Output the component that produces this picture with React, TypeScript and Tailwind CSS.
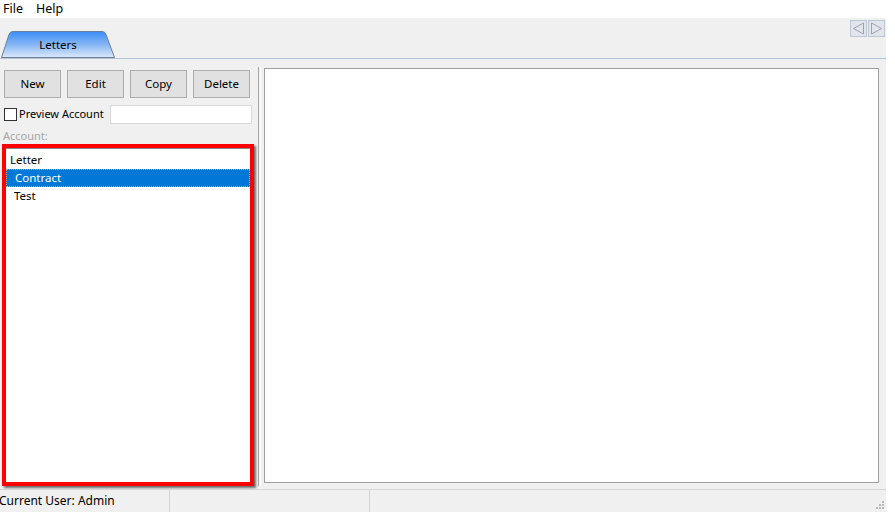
import React from 'react';

const font = { fontFamily: '"Noto Sans", "Open Sans", sans-serif' };

// blue gradient tab with slanted sides
const TabShape: React.FC = () => (
  <svg className="absolute inset-0" width="114" height="27" viewBox="0 0 114 27">
    <defs>
      <linearGradient id="tabFill" x1="0" y1="0" x2="0" y2="1">
        <stop offset="0" stopColor="#3a8cf6" />
        <stop offset="0.55" stopColor="#8dbaf5" />
        <stop offset="1" stopColor="#dce9fb" />
      </linearGradient>
    </defs>
    <path
      d="M0.5 26.5 L8 3.5 Q9 0.5 12 0.5 L101 0.5 Q104 0.5 105 3.5 L113.5 26.5 Z"
      fill="url(#tabFill)"
      stroke="#6d7f96"
      strokeWidth="1"
    />
  </svg>
);

const ArrowButton: React.FC<{ dir: 'left' | 'right' }> = ({ dir }) => (
  <div className="w-[17px] h-[17px] bg-[#e2e6ec] border border-[#bcc7d4] flex items-center justify-center">
    <svg width="13" height="13" viewBox="0 0 13 13">
      {dir === 'left' ? (
        <path d="M11.5 1 L1.5 6.5 L11.5 12 Z" fill="none" stroke="#9aa3ae" strokeWidth="1" />
      ) : (
        <path d="M1.5 1 L11.5 6.5 L1.5 12 Z" fill="none" stroke="#9aa3ae" strokeWidth="1" />
      )}
    </svg>
  </div>
);

const ToolButton: React.FC<{ label: string }> = ({ label }) => (
  <button className="w-[57px] h-[28px] bg-[#e1e1e1] border border-[#adadad] text-[11.5px] text-black flex items-center justify-center">
    {label}
  </button>
);

const App: React.FC = () => {
  const items = [
    { name: 'Letter', indent: false, selected: false },
    { name: 'Contract', indent: true, selected: true },
    { name: 'Test', indent: true, selected: false },
  ];

  return (
    <div className="w-[895px] h-[512px] bg-white flex overflow-hidden" style={font}>
      <div className="w-[886px] h-full bg-[#f0f0f0] flex flex-col">
        {/* Menu bar */}
        <div className="h-[18px] bg-white flex items-center text-[12.5px] text-black leading-none w-[895px]">
          <span className="ml-[3px]">File</span>
          <span className="ml-[13px]">Help</span>
        </div>

        {/* Tab strip */}
        <div className="h-[41px] flex items-start justify-between border-b border-[#b4c3d5]">
          <div className="relative ml-[1px] mt-[13px] w-[114px] h-[27px] flex items-center justify-center">
            <TabShape />
            <span className="relative text-[11.5px] text-black mt-[1px]">Letters</span>
          </div>
          <div className="flex gap-px mt-[2px] mr-[1px]">
            <ArrowButton dir="left" />
            <ArrowButton dir="right" />
          </div>
        </div>

        {/* Body */}
        <div className="flex-1 flex">
          {/* Left pane */}
          <div className="w-[256px] flex flex-col pt-[11px]">
            <div className="flex gap-[6px] pl-[4px]">
              <ToolButton label="New" />
              <ToolButton label="Edit" />
              <ToolButton label="Copy" />
              <ToolButton label="Delete" />
            </div>
            <div className="flex items-center mt-[7px] pl-[4px] w-[252px] h-[19px]">
              <div className="w-[13px] h-[13px] border border-[#333] bg-white" />
              <span className="ml-[2px] text-[11px] text-black">Preview Account</span>
              <div className="ml-auto w-[142px] h-[19px] bg-white border border-[#d9d9d9]" />
            </div>
            <div className="mt-[5px] pl-[3px] text-[11px] text-[#a6a6a6] leading-[14px]">Account:</div>
            <div className="mt-px ml-[2px] w-[252px] h-[342px] border-[4px] border-[#ff0000] shadow-[2px_2px_2px_rgba(0,0,0,0.55)] bg-white">
              <div className="h-full border-t border-[#888] pt-[2px] flex flex-col">
                {items.map((item) => (
                  <div
                    key={item.name}
                    className={
                      item.selected
                        ? 'h-[18px] flex items-center bg-[#0078d7] text-white border border-dotted border-[#f4a23c] text-[11.5px]'
                        : 'h-[18px] flex items-center text-black text-[11.5px]'
                    }
                  >
                    <span className={item.indent ? 'ml-[8px]' : 'ml-[4px]'}>{item.name}</span>
                  </div>
                ))}
              </div>
            </div>
          </div>

          {/* Splitter */}
          <div className="w-[8px] flex pt-[8px] pb-[3px]">
            <div className="ml-[2px] w-px bg-[#a8a8a8]" />
            <div className="ml-px w-px bg-white" />
          </div>

          {/* Preview pane */}
          <div className="flex-1 pt-[9px] pb-[6px] pr-[7px]">
            <div className="w-full h-full bg-white border border-[#a0a0a0]" />
          </div>
        </div>

        {/* Status bar */}
        <div className="h-[23px] border-t border-[#d7d7d7] flex items-center text-[12px] text-black relative">
          <div className="w-[170px] h-full flex items-center border-r border-[#d4d4d4]">
            <span className="-ml-[1px]">Current User: Admin</span>
          </div>
          <div className="w-[200px] h-full border-r border-[#d4d4d4]" />
          <div className="flex-1" />
          <svg className="absolute right-[2px] bottom-[3px]" width="8" height="8" viewBox="0 0 8 8">
            <rect x="6" y="0" width="2" height="2" fill="#b8b8b8" />
            <rect x="3" y="3" width="2" height="2" fill="#b8b8b8" />
            <rect x="6" y="3" width="2" height="2" fill="#b8b8b8" />
            <rect x="0" y="6" width="2" height="2" fill="#b8b8b8" />
            <rect x="3" y="6" width="2" height="2" fill="#b8b8b8" />
            <rect x="6" y="6" width="2" height="2" fill="#b8b8b8" />
          </svg>
        </div>
      </div>
    </div>
  );
};

export default App;
